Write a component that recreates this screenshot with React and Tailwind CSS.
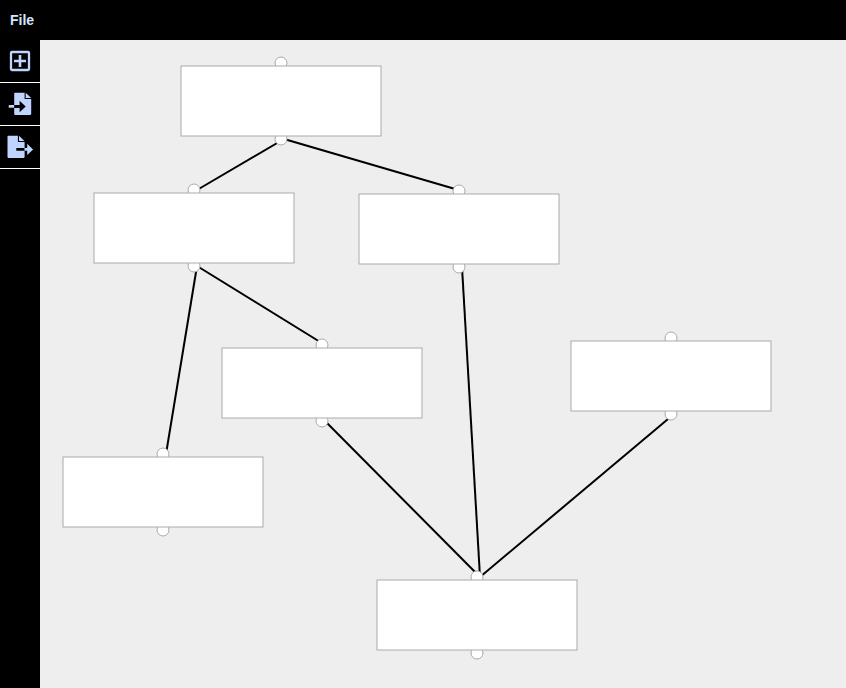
const nodes = [
  { x: 141, y: 26 },
  { x: 54, y: 153 },
  { x: 319, y: 154 },
  { x: 182, y: 308 },
  { x: 531, y: 301 },
  { x: 23, y: 417 },
  { x: 337, y: 540 },
];

const edges = [
  [0, 1],
  [0, 2],
  [1, 5],
  [1, 3],
  [3, 6],
  [2, 6],
  [4, 6],
];

function Node({ x, y }) {
  return (
    <g fill="white" stroke="#aaaaaa">
      <circle cx={x + 100} cy={y - 3} r="6" />
      <circle cx={x + 100} cy={y + 73} r="6" />
      <rect x={x} y={y} width="200" height="70" />
    </g>
  );
}

function AddIcon() {
  return (
    <svg width="40" height="42" viewBox="0 0 40 42" fill="currentColor">
      <rect x="11" y="12" width="18" height="18" rx="1" fill="none" stroke="currentColor" strokeWidth="2.3" />
      <path d="M18.7 15.1h2.6v4.6H26v2.6h-4.7v4.6h-2.6v-4.6H14v-2.6h4.7z" />
    </svg>
  );
}

function ImportIcon() {
  return (
    <svg width="40" height="42" viewBox="0 0 40 42" fill="currentColor">
      <path d="M15 9.8h9.6v6.3h6.6v15c0 .5-.3.8-.8.8H15c-.5 0-.8-.3-.8-.8v-6.2h5.4v4.3l6.1-5.7-6.1-5.7v4.1h-5.4V10.6c0-.5.3-.8.8-.8z" />
      <path d="M25.7 9.8l5.5 5.2h-5.5z" />
      <path d="M9.3 22h4.9v2.8H9.3c-.4 0-.6-.2-.6-.6v-1.6c0-.4.2-.6.6-.6z" />
    </svg>
  );
}

function ExportIcon() {
  return (
    <svg width="40" height="42" viewBox="0 0 40 42" fill="currentColor">
      <path d="M8.3 9.8h9.6v6.3h6.7V22h-8.3v2.8h8.3v6.3c0 .5-.3.8-.8.8H8.3c-.5 0-.8-.3-.8-.8V10.6c0-.5.3-.8.8-.8z" />
      <path d="M19 9.8l5.5 5.2H19z" />
      <path d="M24.5 22h2.7v-4.3l5.9 5.7-5.9 5.7v-4.3h-2.7z" />
    </svg>
  );
}

function ToolButton({ label, children }) {
  return (
    <button aria-label={label} className="block h-[43px] w-10 border-b border-white text-[#bfd4ff]">
      {children}
    </button>
  );
}

export default function App() {
  return (
    <div className="flex h-screen flex-col overflow-hidden bg-black font-['Liberation_Sans',sans-serif]">
      <header className="flex h-10 shrink-0 items-center px-2.5">
        <button className="text-sm font-bold text-[#d6e4ff]">File</button>
      </header>
      <div className="flex min-h-0 flex-1">
        <aside className="flex w-10 shrink-0 flex-col">
          <ToolButton label="Add node"><AddIcon /></ToolButton>
          <ToolButton label="Import"><ImportIcon /></ToolButton>
          <ToolButton label="Export"><ExportIcon /></ToolButton>
        </aside>
        <main className="min-w-0 flex-1 bg-[#eeeeee]">
          <svg className="block h-full w-full">
            <g stroke="black" strokeWidth="2">
              {edges.map(([a, b]) => (
                <line
                  key={`${a}-${b}`}
                  x1={nodes[a].x + 103}
                  y1={nodes[a].y + 73}
                  x2={nodes[b].x + 103}
                  y2={nodes[b].y - 3}
                />
              ))}
            </g>
            {nodes.map((n) => (
              <Node key={`${n.x}-${n.y}`} x={n.x} y={n.y} />
            ))}
          </svg>
        </main>
      </div>
    </div>
  );
}
